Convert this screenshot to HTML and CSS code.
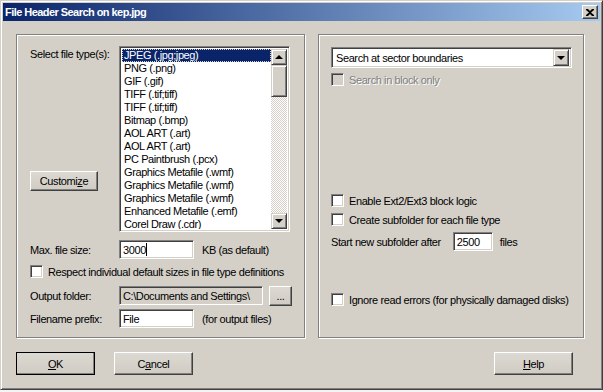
FILE: index.html
```html
<!DOCTYPE html>
<html>

<head>
  <title>File Header Search</title>
  <link rel="stylesheet" href="styles.css">
</head>

<body>
  <div class="window">
    <div class="titlebar">
      <span class="title">File Header Search on kep.jpg</span>
      <span class="close">
        <svg width="8" height="7" viewBox="0 0 8 7"><path d="M0 0h2l2 2 2-2h2v1L5 3.5 8 6v1H6L4 5 2 7H0V6l3-2.5L0 1z" fill="#000"/></svg>
      </span>
    </div>

    <div class="content">
      <div class="groups">
        <!-- left group: file types and output -->
        <div class="group group-left">
          <div class="types">
            <div class="types-side">
              <span>Select file type(s):</span>
              <div class="btn customize">Customi<u>z</u>e</div>
            </div>
            <div class="listbox field">
              <ul class="items">
                <li class="selected"><span>JPEG (.jpg;jpeg)</span></li>
                <li>PNG (.png)</li>
                <li>GIF (.gif)</li>
                <li>TIFF (.tif;tiff)</li>
                <li>TIFF (.tif;tiff)</li>
                <li>Bitmap (.bmp)</li>
                <li>AOL ART (.art)</li>
                <li>AOL ART (.art)</li>
                <li>PC Paintbrush (.pcx)</li>
                <li>Graphics Metafile (.wmf)</li>
                <li>Graphics Metafile (.wmf)</li>
                <li>Graphics Metafile (.wmf)</li>
                <li>Enhanced Metafile (.emf)</li>
                <li>Corel Draw (.cdr)</li>
              </ul>
              <div class="scrollbar">
                <div class="sb-btn"><span class="arrow-up"></span></div>
                <div class="sb-thumb"></div>
                <div class="sb-track"></div>
                <div class="sb-btn"><span class="arrow-down"></span></div>
              </div>
            </div>
          </div>

          <div class="row row-size">
            <span class="lbl">Max. file size:</span>
            <div class="field input w75">3000<span class="caret"></span></div>
            <span class="after">KB (as default)</span>
          </div>

          <div class="row row-respect">
            <span class="check"></span>
            <span>Respect individual default sizes in file type definitions</span>
          </div>

          <div class="row row-folder">
            <span class="lbl">Output folder:</span>
            <div class="field input readonly w144">C:\Documents and Settings\</div>
            <div class="btn dots">...</div>
          </div>

          <div class="row row-prefix">
            <span class="lbl">Filename prefix:</span>
            <div class="field input w75">File</div>
            <span class="after">(for output files)</span>
          </div>
        </div>

        <!-- right group: search options -->
        <div class="group group-right">
          <div class="combo field">
            <span class="combo-text">Search at sector boundaries</span>
            <div class="combo-btn"><span class="arrow-down"></span></div>
          </div>

          <div class="row row-block disabled">
            <span class="check"></span>
            <span>Search in block only</span>
          </div>

          <div class="row row-ext">
            <span class="check"></span>
            <span>Enable Ext2/Ext3 block logic</span>
          </div>

          <div class="row">
            <span class="check"></span>
            <span>Create subfolder for each file type</span>
          </div>

          <div class="row row-start">
            <span>Start new subfolder after</span>
            <div class="field input w40">2500</div>
            <span>files</span>
          </div>

          <div class="row row-ignore">
            <span class="check"></span>
            <span>Ignore read errors (for physically damaged disks)</span>
          </div>
        </div>
      </div>

      <div class="buttons">
        <div class="btn big default"><u>O</u>K</div>
        <div class="btn big">C<u>a</u>ncel</div>
        <div class="btn big help"><u>H</u>elp</div>
      </div>
    </div>
  </div>
</body>

</html>
```

FILE: styles.css
```css
body {
  margin: 0;
  background-color: #f4f4f4;
  font-family: 'Liberation Sans', Arial, sans-serif;
  font-size: 11px;
  letter-spacing: -0.4px;
  color: #000;
}

.window {
  width: 603px;
  height: 390px;
  box-sizing: border-box;
  background-color: #d4d0c8;
  border: 1px solid;
  border-color: #d4d0c8 #404040 #404040 #d4d0c8;
  box-shadow: inset 1px 1px #fff, inset -1px -1px #808080;
  padding: 2px;
}

/* title bar */
.titlebar {
  height: 18px;
  display: flex;
  align-items: center;
  justify-content: space-between;
  padding: 0 2px 0 2px;
  background: linear-gradient(to right, #0a246a, #a6caf0);
}

.title {
  color: #fff;
  font-weight: bold;
  font-size: 11px;
  letter-spacing: -0.55px;
}

.close {
  width: 16px;
  height: 14px;
  box-sizing: border-box;
  background-color: #d4d0c8;
  border: 1px solid;
  border-color: #fff #404040 #404040 #fff;
  box-shadow: inset -1px -1px #808080;
  display: flex;
  align-items: center;
  justify-content: center;
}

.content {
  padding: 13px 0 0 13px;
}

.groups {
  display: flex;
  gap: 13px;
}

.group {
  height: 304px;
  box-sizing: border-box;
  border: 1px solid #808080;
  box-shadow: inset 1px 1px #fff, 1px 1px #fff;
}

.group-left {
  width: 289px;
  padding: 11px 0 0 13px;
}

.group-right {
  width: 266px;
  padding: 12px 0 0 12px;
}

/* shared widgets */
.field {
  box-sizing: border-box;
  background-color: #fff;
  border: 1px solid;
  border-color: #808080 #fff #fff #808080;
  box-shadow: inset 1px 1px #404040, inset -1px -1px #d4d0c8;
}

.btn {
  box-sizing: border-box;
  background: linear-gradient(#dcd9d2, #d0ccc4);
  border: 1px solid;
  border-color: #fff #404040 #404040 #fff;
  box-shadow: inset -1px -1px #808080;
  display: flex;
  align-items: center;
  justify-content: center;
}

.check {
  width: 13px;
  height: 13px;
  box-sizing: border-box;
  background-color: #fff;
  border: 1px solid;
  border-color: #808080 #fff #fff #808080;
  box-shadow: inset 1px 1px #404040, inset -1px -1px #d4d0c8;
  margin-right: 5px;
  flex: none;
}

.row {
  display: flex;
  align-items: center;
  height: 19px;
  white-space: nowrap;
}

.lbl {
  width: 89px;
  flex: none;
}

.input {
  height: 19px;
  padding: 0 3px;
  display: flex;
  align-items: center;
  white-space: nowrap;
  overflow: hidden;
}

.w75 { width: 75px; }
.w144 { width: 144px; }
.w40 { width: 40px; }

.after {
  margin-left: 8px;
}

.readonly {
  background-color: #d4d0c8;
}

.caret {
  width: 1px;
  height: 13px;
  background-color: #000;
}

/* file type list */
.types {
  display: flex;
  height: 186px;
}

.types-side {
  width: 89px;
  display: flex;
  flex-direction: column;
  padding-top: 2px;
  box-sizing: border-box;
}

.customize {
  width: 68px;
  height: 20px;
  margin-top: 111px;
}

.listbox {
  width: 171px;
  height: 186px;
  display: flex;
  padding: 2px;
}

.items {
  list-style: none;
  margin: 0;
  padding: 0;
  flex: 1;
  overflow: hidden;
}

.items li {
  height: 13px;
  line-height: 13px;
  padding-left: 2px;
  white-space: nowrap;
}

.items li.selected {
  background-color: #0a246a;
  color: #fff;
  outline: 1px dotted #d4d0c8;
  outline-offset: -1px;
}

.scrollbar {
  width: 16px;
  display: flex;
  flex-direction: column;
}

.sb-btn,
.sb-thumb,
.combo-btn {
  box-sizing: border-box;
  background-color: #d4d0c8;
  border: 1px solid;
  border-color: #d4d0c8 #404040 #404040 #d4d0c8;
  box-shadow: inset 1px 1px #fff, inset -1px -1px #808080;
  display: flex;
  align-items: center;
  justify-content: center;
}

.sb-btn {
  height: 16px;
}

.sb-thumb {
  height: 32px;
}

.sb-track {
  flex: 1;
  background: repeating-conic-gradient(#fff 0 25%, #d4d0c8 0 50%) 0 0 / 2px 2px;
}

.arrow-up {
  width: 0;
  height: 0;
  border-left: 4px solid transparent;
  border-right: 4px solid transparent;
  border-bottom: 4px solid #000;
}

.arrow-down {
  width: 0;
  height: 0;
  border-left: 4px solid transparent;
  border-right: 4px solid transparent;
  border-top: 4px solid #000;
}

/* bottom left rows */
.row-size {
  margin-top: 8px;
}

.row-respect {
  margin-top: 3px;
}

.row-folder {
  margin-top: 5px;
}

.dots {
  width: 23px;
  height: 20px;
  margin-left: 6px;
}

.row-prefix {
  margin-top: 4px;
}

/* right side */
.combo {
  width: 241px;
  height: 21px;
  display: flex;
  align-items: center;
  padding: 2px;
}

.combo-text {
  flex: 1;
  padding-left: 2px;
}

.combo-btn {
  width: 16px;
  height: 17px;
}

.row-block {
  margin-top: 2px;
}

.disabled {
  color: #808080;
  text-shadow: 1px 1px #fff;
}

.disabled .check {
  background-color: #d4d0c8;
}

.row-ext {
  margin-top: 102px;
}

.row-start {
  margin-top: 3px;
}

.row-start .input {
  margin: 0 7px 0 12px;
}

.row-ignore {
  margin-top: 39px;
}

/* dialog buttons */
.buttons {
  display: flex;
  gap: 19px;
  margin-top: 14px;
  padding-right: 27px;
}

.big {
  width: 79px;
  height: 23px;
}

.default {
  outline: 1px solid #000;
  outline-offset: -1px;
  border-color: #fff #404040 #404040 #fff;
}

.help {
  margin-left: auto;
}
```
